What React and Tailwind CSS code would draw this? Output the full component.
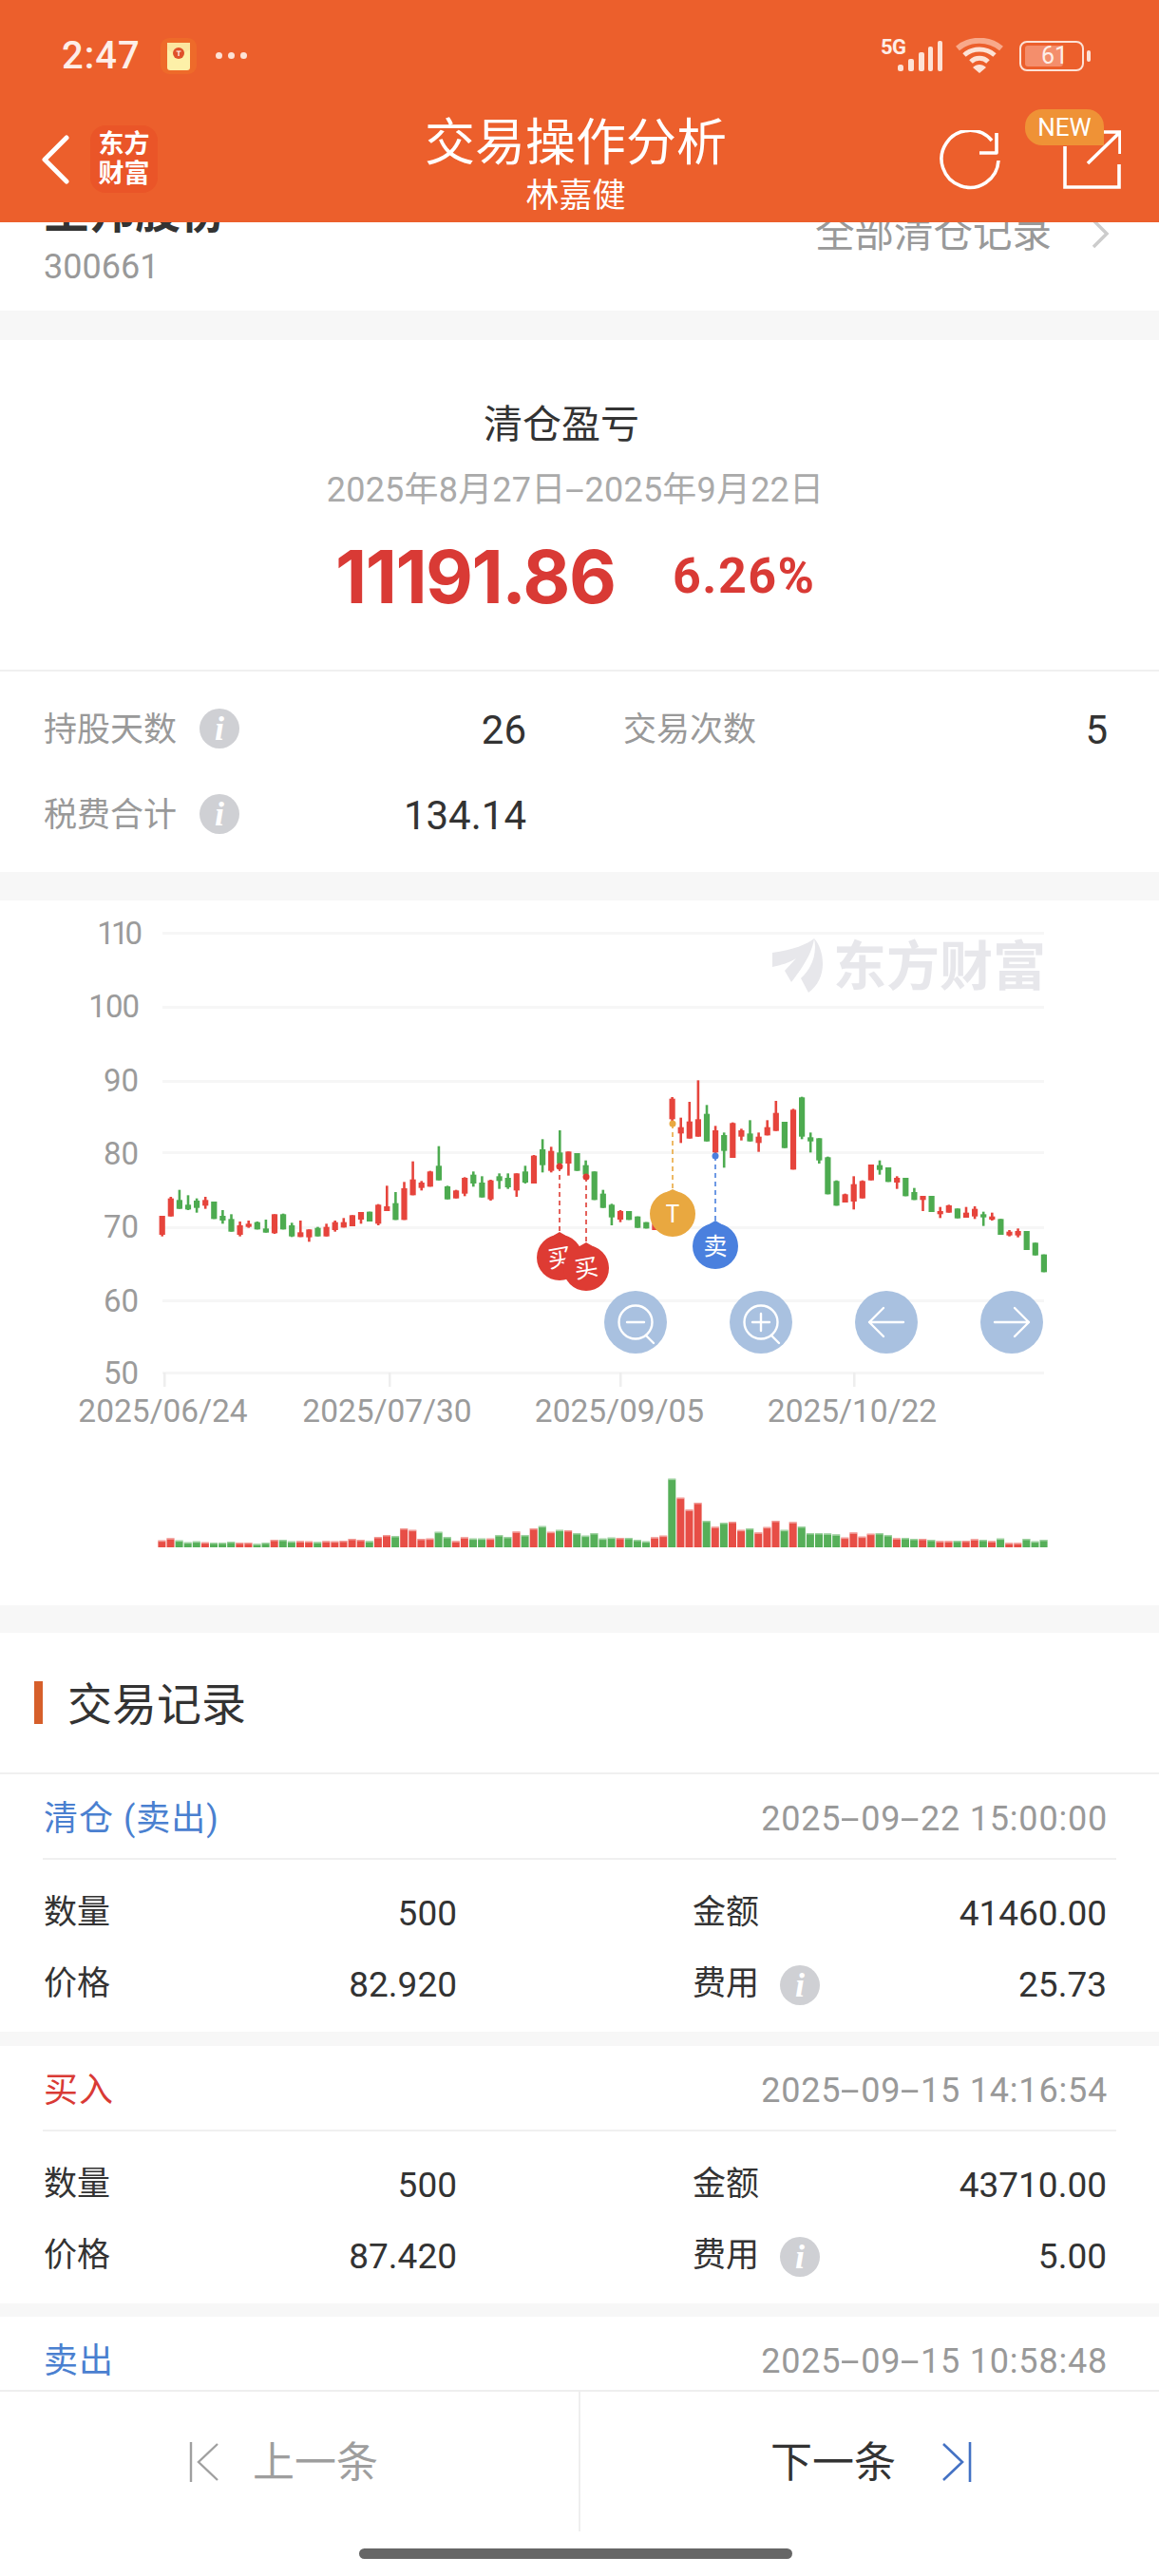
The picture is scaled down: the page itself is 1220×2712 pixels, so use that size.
const FONT = "font-[Roboto,'Noto_Sans_CJK_SC',sans-serif]";

// [colour, wickTop, bodyTop, bodyBottom, wickBottom] in crop units; y = 960 + v / 3
const candles = [
  ['r',960,960,1020,1025],['r',900,905,962,962],['g',878,910,938,938],['g',895,925,940,942],['g',905,912,935,950],
  ['r',900,910,928,938],['g',915,915,970,970],['g',942,960,975,985],['g',955,970,1010,1010],['r',978,990,1020,1025],
  ['r',975,985,995,998],['g',978,980,1003,1003],['g',972,1000,1013,1013],['r',955,955,1015,1017],['g',953,955,1003,1003],
  ['g',982,990,1025,1027],['r',975,1012,1027,1027],['r',1003,1003,1028,1042],['g',995,998,1025,1025],['r',985,995,1025,1025],
  ['r',975,980,1005,1010],['r',967,980,997,997],['r',958,958,993,993],['r',948,948,972,985],['g',947,947,978,978],
  ['r',923,925,985,990],['r',865,930,945,945],['g',885,920,973,973],['r',853,873,973,973],['r',788,845,895,895],
  ['r',850,855,872,880],['r',818,820,868,868],['g',740,802,848,848],['g',865,867,908,908],['r',878,880,905,905],
  ['r',838,840,890,898],['g',820,830,858,868],['g',835,855,902,902],['r',846,848,908,912],['g',826,835,850,875],
  ['g',826,840,870,875],['r',826,826,880,900],['g',802,820,855,858],['r',768,770,858,858],['g',718,750,800,823],
  ['r',742,755,818,823],['g',690,760,795,800],['r',757,757,795,833],['g',762,762,818,818],['g',785,800,830,830],
  ['g',820,820,910,910],['g',878,890,935,935],['g',922,925,965,990],['r',942,945,972,980],['g',945,945,973,973],
  ['g',962,962,998,998],['g',980,980,1000,1000],['r',985,985,1005,1005],['r',990,992,1005,1005],['r',585,590,655,660],
  ['r',650,680,700,730],['r',600,662,716,716],['r',532,655,710,710],['g',610,638,725,725],['r',676,690,760,762],
  ['g',697,705,755,808],['r',665,667,777,777],['r',685,690,710,722],['g',658,700,725,725],['r',697,710,730,758],
  ['r',658,680,706,706],['r',597,635,692,692],['g',663,663,746,746],['r',622,625,814,814],['g',584,586,710,718],
  ['g',697,712,725,760],['g',715,715,785,795],['g',773,775,892,892],['g',848,850,928,928],['r',890,892,918,918],
  ['r',835,860,915,940],['r',848,850,905,905],['r',798,798,848,848],['g',785,800,815,830],['g',807,807,853,853],
  ['r',835,840,855,875],['g',840,840,898,898],['g',872,885,910,910],['r',897,897,910,945],['g',897,897,948,948],
  ['r',932,945,955,967],['r',925,927,950,950],['g',937,937,968,968],['r',932,950,966,966],['r',930,938,962,970],
  ['g',947,955,965,992],['r',950,962,972,975],['g',970,970,1020,1020],['r',1005,1010,1022,1025],['r',1000,1008,1022,1028],
  ['g',1008,1008,1068,1068],['g',1045,1045,1085,1085],['g',1082,1082,1138,1138],
];

const vols = [
  ['r',305],['r',298],['g',305],['g',311],['g',308],['r',311],['g',312],['g',312],['g',309],['r',312],['r',312],['g',316],['g',312],
  ['r',303],['g',303],['g',308],['r',307],['r',308],['g',310],['r',307],['r',308],['r',306],['r',300],['r',303],['g',307],['r',294],
  ['r',288],['g',291],['r',267],['r',272],['r',300],['r',299],['g',278],['g',294],['r',307],['r',295],['g',299],['g',299],['r',299],
  ['g',288],['g',294],['r',277],['g',288],['r',267],['g',260],['r',278],['g',272],['r',273],['g',282],['g',290],['g',282],['g',299],
  ['g',296],['r',297],['g',297],['g',303],['g',308],['r',295],['r',290],['g',110],['r',170],['r',208],['r',186],['g',243],['r',262],
  ['g',249],['r',246],['r',272],['g',267],['r',280],['r',263],['r',243],['g',272],['r',247],['g',261],['g',282],['g',282],['g',283],
  ['g',286],['r',296],['r',280],['r',293],['r',284],['g',282],['g',288],['r',298],['g',297],['g',300],['r',300],['g',303],['r',307],
  ['r',307],['g',306],['r',306],['r',301],['g',303],['r',307],['g',299],['r',313],['r',313],['g',300],['g',308],['g',303],
];

const RED = '#e6443c';
const GREEN = '#4dab50';

function Dash() {
  return <span className="mx-[5px] inline-block scale-x-[2]">-</span>;
}

function Pin({ x, dotY, topY, cy, color, label, tilt }) {
  return (
    <g>
      <circle cx={x} cy={dotY} r="3.5" fill={color} />
      <line x1={x} y1={dotY} x2={x} y2={topY} stroke={color} strokeWidth="1.6" strokeDasharray="5 4" />
      <circle cx={x} cy={cy} r="24" fill={color} />
      <path d={`M${x - 12} ${cy - 20} L${x} ${topY} L${x + 12} ${cy - 20} Z`} fill={color} />
      <text
        x={x}
        y={cy + 9}
        textAnchor="middle"
        fontSize="25"
        fill="#fff"
        fontFamily="'Noto Sans CJK SC',sans-serif"
        transform={tilt ? `rotate(-10 ${x} ${cy})` : undefined}
      >
        {label}
      </text>
    </g>
  );
}

function RoundBtn({ cx, kind }) {
  const cy = 1392;
  const s = { stroke: '#fff', strokeWidth: 2.4, fill: 'none', strokeLinecap: 'round', strokeLinejoin: 'round' };
  return (
    <g>
      <circle cx={cx} cy={cy} r="33" fill="#a9c1e0" />
      {(kind === 'minus' || kind === 'plus') && (
        <g {...s}>
          <circle cx={cx} cy={cy} r="17.5" />
          <path d={`M${cx + 11} ${cy + 14} L${cx + 19} ${cy + 22}`} />
          <path d={`M${cx - 9} ${cy} H${cx + 9}`} />
          {kind === 'plus' && <path d={`M${cx} ${cy - 9} V${cy + 9}`} />}
        </g>
      )}
      {kind === 'left' && <path {...s} d={`M${cx + 18} ${cy} H${cx - 18} M${cx - 3} ${cy - 15} L${cx - 18} ${cy} L${cx - 3} ${cy + 15}`} />}
      {kind === 'right' && <path {...s} d={`M${cx - 18} ${cy} H${cx + 18} M${cx + 3} ${cy - 15} L${cx + 18} ${cy} L${cx + 3} ${cy + 15}`} />}
    </g>
  );
}

function Chart() {
  const grid = [982, 1060, 1138, 1213, 1292, 1369, 1445];
  const labels = ['110', '100', '90', '80', '70', '60', '50'];
  const labelY = [982, 1059, 1137, 1214, 1291, 1369, 1445];
  const X = (i) => 170.7 + 9.1 * i;
  const Y = (v) => 960 + v / 3;
  const textFont = "Roboto,'Noto Sans CJK SC',sans-serif";
  return (
    <svg className="block" width="1220" height="742" viewBox="0 948 1220 742">
      {grid.map((y) => (
        <rect key={y} x="171" y={y - 1} width="928" height="3" fill="#f6f6f6" />
      ))}
      {[172, 409, 652, 898].map((x) => (
        <rect key={x} x={x} y="1445" width="2.5" height="15" fill="#eeeeee" />
      ))}
      {labels.map((t, i) => (
        <text
          key={t}
          x="146"
          y={labelY[i] + 12}
          textAnchor="end"
          fontSize="33"
          fill="#9b9b9b"
          fontFamily={textFont}
          letterSpacing={t === '110' ? -4 : t === '100' ? -1 : 0}
        >
          {t}
        </text>
      ))}
      {[['2025/06/24', 171.5], ['2025/07/30', 407.5], ['2025/09/05', 652], ['2025/10/22', 897]].map(([t, x]) => (
        <text key={t} x={x} y="1497" textAnchor="middle" fontSize="33.5" fill="#9b9b9b" fontFamily={textFont}>
          {t}
        </text>
      ))}

      <path d="M813 1003 C835 1000 850 994 857 988 C855 1005 842 1022 833 1034 L826 1022 L838 1009 C830 1014 822 1016 813 1018 Z" fill="#e7e7eb" />
      <path d="M857 988 C868 1000 872 1030 851 1045 L843 1030 C856 1018 860 1002 857 988 Z" fill="#e7e7eb" />
      <text x="877" y="1037" fontSize="56" fontWeight="700" fill="#e7e7eb" fontFamily="'Noto Sans CJK SC',sans-serif">
        东方财富
      </text>

      {candles.map(([c, hi, top, bot, lo], i) => {
        const fill = c === 'r' ? RED : GREEN;
        const x = X(i);
        return (
          <g key={i} fill={fill}>
            <rect x={x - 1.3} y={Y(hi)} width="2.6" height={(lo - hi) / 3} />
            <rect x={x - 3.1} y={Y(top)} width="6.2" height={Math.max((bot - top) / 3, 2)} />
          </g>
        );
      })}

      <Pin x={589} dotY={1228} topY={1297} cy={1324} color="#de3b33" label="买" tilt />
      <Pin x={617} dotY={1239} topY={1308} cy={1335} color="#de3b33" label="买" tilt />
      <Pin x={708} dotY={1183} topY={1252} cy={1278} color="#e9a840" label="T" />
      <Pin x={753} dotY={1217} topY={1285} cy={1312} color="#4a80de" label="卖" />

      <RoundBtn cx={669} kind="minus" />
      <RoundBtn cx={801} kind="plus" />
      <RoundBtn cx={933} kind="left" />
      <RoundBtn cx={1065} kind="right" />

      {vols.map(([c, top], i) => {
        const fill = c === 'r' ? RED : GREEN;
        const y = 1520 + top / 3;
        return (
          <g key={i}>
            <rect x={170.4 + 9.1 * i - 4} y={y} width="8" height={1629 - y} fill={fill} opacity="0.95" />
            <rect x={170.4 + 9.1 * i - 4} y={y} width="8" height="1.5" fill="#fff" opacity="0.45" />
          </g>
        );
      })}
    </svg>
  );
}

function InfoIcon() {
  return (
    <span className="flex h-[42px] w-[42px] shrink-0 items-center justify-center rounded-full bg-[#cfd0d4] font-['Liberation_Serif',serif] text-[36px] italic font-bold leading-none text-white">
      i
    </span>
  );
}

function Stat({ label, value, info, width }) {
  return (
    <div className={`flex h-[90px] items-center ${width}`}>
      <span className="pt-[4px] text-[35px] text-[#999999]">{label}</span>
      {info && (
        <span className="ml-[24px]">
          <InfoIcon />
        </span>
      )}
      <span className="ml-auto pt-[2px] text-[42px] text-[#333333]">{value}</span>
    </div>
  );
}

function Record({ type, typeColor, time, qty, amount, price, fee }) {
  return (
    <section className="h-[271px] bg-white">
      <div className="mx-[45px] flex h-[90px] items-center justify-between border-b-2 border-[#f0f0f0] pl-[1px] pr-[9px] pt-[6px]">
        <span className={`text-[36px] tracking-[1px] ${typeColor}`}>{type}</span>
        <span className="text-[36px] tracking-[0.8px] text-[#999999]">{time}</span>
      </div>
      <div className="grid grid-cols-[435px_436px] gap-x-[248px] pl-[46px] pt-[19px]">
        <Row label="数量" value={qty} />
        <Row label="金额" value={amount} />
        <Row label="价格" value={price} />
        <Row label="费用" value={fee} info />
      </div>
    </section>
  );
}

function Row({ label, value, info }) {
  return (
    <div className="flex h-[75px] items-center">
      <span className="text-[35px] text-[#333333]">{label}</span>
      {info && (
        <span className="ml-[22px]">
          <InfoIcon />
        </span>
      )}
      <span className="ml-auto text-[37px] text-[#333333]">{value}</span>
    </div>
  );
}

function StatusBar() {
  return (
    <div className="flex h-[118px] items-center pb-[1px] pl-[65px] pr-[72px]">
      <span className="text-[40px] font-medium leading-none tracking-[1px] text-[#fdeee8]">2:47</span>
      <svg className="ml-[21px]" width="38" height="38" viewBox="0 0 38 38">
        <rect x="0" y="0" width="38" height="38" rx="9" fill="#ee6a2a" />
        <rect x="7" y="5" width="24" height="29" rx="3" fill="#fdf0a8" />
        <path d="M7 5 H31 V12 L19 20 L7 12 Z" fill="#fbe6a0" />
        <circle cx="19" cy="16" r="6" fill="#e0502a" />
        <path d="M16.5 14 H21.5 M19 14 V19" stroke="#fff" strokeWidth="1.2" />
      </svg>
      <span className="ml-[20px] flex gap-[6px]">
        <i className="h-[7px] w-[7px] rounded-full bg-[#fde2d6]" />
        <i className="h-[7px] w-[7px] rounded-full bg-[#fde2d6]" />
        <i className="h-[7px] w-[7px] rounded-full bg-[#fde2d6]" />
      </span>
      <div className="ml-auto flex items-center">
        <span className="relative h-[34px] w-[66px]">
          <span className="absolute left-0 top-[-3px] text-[22px] font-bold leading-none tracking-[-0.5px] text-[#fdeee8]">5G</span>
          <svg className="absolute left-[17px] top-0" width="49" height="34" viewBox="0 0 49 34">
            <rect x="1" y="26" width="6" height="7" rx="2.5" fill="#fde2d6" />
            <rect x="12" y="20" width="6" height="13" rx="2" fill="#fde2d6" />
            <rect x="23" y="13" width="6" height="20" rx="2" fill="#fde2d6" />
            <rect x="33" y="7" width="5" height="26" rx="2" fill="#fde2d6" />
            <rect x="43" y="1" width="5" height="32" rx="2" fill="#fde2d6" />
          </svg>
        </span>
        <svg className="ml-[13px]" width="50" height="38" viewBox="0 0 50 38" fill="none">
          <path d="M2 11 C15 0 35 0 48 11" stroke="#f8a98a" strokeWidth="6" />
          <path d="M9 18 C18 10 32 10 41 18" stroke="#fde2d6" strokeWidth="5" />
          <path d="M16 25 C21 20 29 20 34 25" stroke="#fde2d6" strokeWidth="5" />
          <path d="M25 37 L18 31 C22 27 28 27 32 31 Z" fill="#fde2d6" />
        </svg>
        <span className="relative ml-[17px] flex h-[32px] w-[68px] items-center justify-center rounded-[8px] border-[2.5px] border-[#fde2d6]">
          <span className="absolute bottom-[3px] left-[4px] top-[3px] w-[40px] rounded-[3px] bg-[#f48e6c]" />
          <span className="relative ml-[6px] text-[25px] leading-none text-[#fdeee8]">61</span>
        </span>
        <span className="ml-[3px] h-[12px] w-[4px] rounded-[2px] bg-[#fde2d6]" />
      </div>
    </div>
  );
}

function NavBar() {
  return (
    <div className="flex h-[116px] items-start">
      <div className="flex w-[447px] items-center pl-[43px] pt-[14px]">
        <svg width="30" height="52" viewBox="0 0 30 52" fill="none">
          <path d="M27 3 L4 26 L27 49" stroke="#fff" strokeWidth="5" strokeLinecap="round" strokeLinejoin="round" />
        </svg>
        <div className="ml-[22px] flex h-[71px] w-[71px] flex-col items-center justify-center rounded-[16px] bg-[#ea5528] text-[27px] font-bold leading-[31px] text-white">
          <span>东方</span>
          <span>财富</span>
        </div>
      </div>
      <div className="w-[318px] pt-[2px] text-center text-white">
        <div className="h-[62px] text-[53px] font-normal leading-[62px]">交易操作分析</div>
        <div className="mt-[3px] text-[35px] leading-[44px]">林嘉健</div>
      </div>
      <div className="relative flex flex-1 items-start justify-end pr-[40px] pt-[19px]">
        <svg width="64" height="64" viewBox="0 0 64 64" fill="none" stroke="#fff" strokeWidth="3.6" strokeLinejoin="round">
          <path d="M55 11 A30 30 0 1 0 62 32" />
          <path d="M60 3 V24 H42" />
        </svg>
        <svg className="ml-[65px]" width="62" height="62" viewBox="0 0 62 62" fill="none" stroke="#fff" strokeWidth="3.6">
          <path d="M3 17 V60 H60 V36" />
          <path d="M27 35 L60 3 M39 2 H61 V25" />
        </svg>
        <span className="absolute left-[314px] top-[-3px] flex h-[38px] w-[83px] items-center justify-center rounded-[18px] rounded-br-[0px] bg-[#ef9236] text-[26px] leading-none text-white">
          NEW
        </span>
      </div>
    </div>
  );
}

export default function App() {
  return (
    <div className={`relative h-[2712px] w-[1220px] overflow-hidden bg-[#f7f7f7] ${FONT}`}>
      <header className="relative z-10 h-[234px] bg-[#ec5f2c]">
        <StatusBar />
        <NavBar />
      </header>

      <section className="relative -mt-[30px] flex h-[123px] justify-between bg-white pl-[46px] pr-[52px]">
        <div>
          <div className="h-[56px] text-[48px] font-bold leading-[40px] text-[#333333]">圣邦股份</div>
          <div className="text-[36px] leading-[42px] text-[#999999]">300661</div>
        </div>
        <div className="flex h-[84px] items-center">
          <span className="text-[41.5px] text-[#999999]">全部清仓记录</span>
          <svg className="ml-[41px]" width="20" height="32" viewBox="0 0 20 32" fill="none">
            <path d="M3 2 L17 16 L3 30" stroke="#cccccc" strokeWidth="3.5" />
          </svg>
        </div>
      </section>

      <section className="mt-[31px] h-[560px] bg-white">
        <div className="h-[349px] border-b-2 border-[#f0f0f0]">
          <div className="pr-[38px] pt-[60px] text-center text-[41px] leading-[58px] text-[#333333]">清仓盈亏</div>
          <div className="mt-[18px] pr-[9px] text-center text-[36px] leading-[44px] tracking-[0.2px] text-[#aaaaaa]">
            2025年8月27日<Dash />2025年9月22日
          </div>
          <div className="mt-[21px] flex items-center pl-[353px]">
            <span className="w-[355px] font-[Inter,sans-serif] text-[77px] font-bold leading-[96px] tracking-[-1.5px] text-[#d93a35]">11191.86</span>
            <span className="text-[52px] font-bold leading-[96px] tracking-[1.5px] text-[#d93a35]">6.26%</span>
          </div>
        </div>
        <div className="pl-[46px] pr-[54px] pt-[15px]">
          <div className="flex justify-between">
            <Stat label="持股天数" value="26" info width="w-[508px]" />
            <Stat label="交易次数" value="5" width="w-[510px]" />
          </div>
          <Stat label="税费合计" value="134.14" info width="w-[508px]" />
        </div>
      </section>

      <section className="mt-[30px] h-[742px] bg-white">
        <Chart />
      </section>

      <section className="mt-[29px] bg-white">
        <div className="flex h-[149px] items-center border-b-2 border-[#f0f0f0]">
          <span className="ml-[36px] h-[45px] w-[9px] bg-[#d65f2b]" />
          <span className="ml-[26px] pt-[6px] text-[47px] text-[#333333]">交易记录</span>
        </div>
        <Record
          type="清仓 (卖出)"
          typeColor="text-[#4a80d0]"
          time={<>2025<Dash />09<Dash />22 15:00:00</>}
          qty="500"
          amount="41460.00"
          price="82.920"
          fee="25.73"
        />
      </section>
      <div className="mt-[15px]">
        <Record
          type="买入"
          typeColor="text-[#d93a35]"
          time={<>2025<Dash />09<Dash />15 14:16:54</>}
          qty="500"
          amount="43710.00"
          price="87.420"
          fee="5.00"
        />
      </div>
      <div className="mt-[14px]">
        <Record
          type="卖出"
          typeColor="text-[#4a80d0]"
          time={<>2025<Dash />09<Dash />15 10:58:48</>}
          qty="500"
          amount="0.00"
          price="0.000"
          fee="0.00"
        />
      </div>

      <footer className="absolute bottom-0 left-0 z-10 h-[196px] w-full border-t-2 border-[#eeeeee] bg-white">
        <div className="flex h-[147px]">
          <div className="flex w-[611px] items-center border-r-2 border-[#eeeeee] pl-[199px]">
            <svg width="34" height="44" viewBox="0 0 34 44" fill="none" stroke="#a0a0a0" strokeWidth="2.4">
              <path d="M2 1 V43" />
              <path d="M30 3 L10 22 L30 41" />
            </svg>
            <span className="ml-[33px] pt-[2px] text-[44px] text-[#9e9e9e]">上一条</span>
          </div>
          <div className="flex flex-1 items-center pl-[200px]">
            <span className="pt-[2px] text-[44px] text-[#333333]">下一条</span>
            <svg className="ml-[47px]" width="34" height="44" viewBox="0 0 34 44" fill="none" stroke="#4472c4" strokeWidth="2.6">
              <path d="M31 1 V43" />
              <path d="M3 3 L23 22 L3 41" />
            </svg>
          </div>
        </div>
        <div className="mx-auto mt-[18px] h-[11px] w-[456px] -translate-x-[4px] rounded-full bg-[#666666]" />
      </footer>
    </div>
  );
}
